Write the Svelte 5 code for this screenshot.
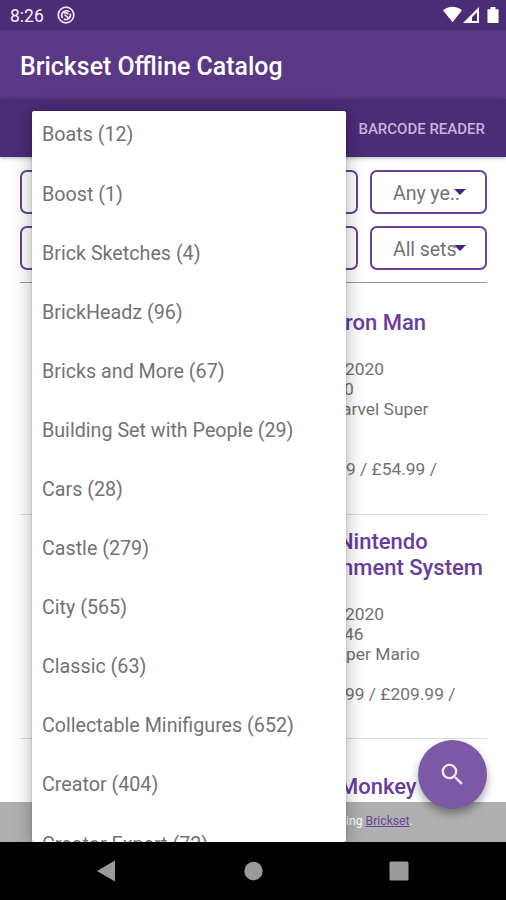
<script lang="ts">
	const themes = [
		{ name: 'Boats', count: 12 },
		{ name: 'Boost', count: 1 },
		{ name: 'Brick Sketches', count: 4 },
		{ name: 'BrickHeadz', count: 96 },
		{ name: 'Bricks and More', count: 67 },
		{ name: 'Building Set with People', count: 29 },
		{ name: 'Cars', count: 28 },
		{ name: 'Castle', count: 279 },
		{ name: 'City', count: 565 },
		{ name: 'Classic', count: 63 },
		{ name: 'Collectable Minifigures', count: 652 },
		{ name: 'Creator', count: 404 },
		{ name: 'Creator Expert', count: 72 }
	];

	const filters = ['Any ye..', 'All sets'];

	// indent = where the visible end of each line starts beside the dropdown
	const sets = [
		{
			title: [{ text: 'ron Man', indent: 3 }],
			info: [
				{ text: '2020', indent: 3 },
				{ text: '0', indent: 2 },
				{ text: 'arvel Super', indent: 0 }
			],
			price: { text: '9 / £54.99 /', indent: 4 }
		},
		{
			title: [
				{ text: 'Nintendo', indent: -4 },
				{ text: 'nment System', indent: -1 }
			],
			info: [
				{ text: '2020', indent: 3 },
				{ text: '46', indent: 2 },
				{ text: 'per Mario', indent: 4 }
			],
			price: { text: '99 / £209.99 /', indent: 3 }
		},
		{ title: [{ text: 'Monkey', indent: -3 }], info: [], price: { text: '', indent: 0 } }
	];
</script>

<div class="screen">
	<header class="status">
		<span class="time">8:26</span>
		<svg class="notify" viewBox="0 0 18 18">
			<circle cx="9" cy="9" r="7.8" />
			<path d="M5.6 12a4.6 4.6 0 0 1 6.8-6.1M13.2 7.4a4.6 4.6 0 0 1-6.4 5.6" />
			<path d="M6.6 7.2c1.8-1 3.6-.6 4.6 1.2M7.6 8.6l5 4.2" />
		</svg>
		<svg class="signals" viewBox="0 0 55 18">
			<path d="M0 4.2C5.6-.5 13.4-.5 19 4.2L9.5 16.2z" />
			<path fill-rule="evenodd" d="M20 17L36 1v16zM29 15h5V6.3l-5 5z" />
			<path d="M44.5 3.2h3V1h5v2.2h3V17h-11z" />
		</svg>
	</header>

	<div class="app-bar"><h1>Brickset Offline Catalog</h1></div>
	<div class="tabs"><span>BARCODE READER</span></div>

	<main>
		<div class="filters">
			{#each filters as label}
				<div class="spinner"></div>
				<div class="spinner">
					<span>{label}</span>
					<svg viewBox="0 0 12 6"><path d="M0 0h12L6 6z" /></svg>
				</div>
			{/each}
		</div>

		<ul class="sets">
			{#each sets as set}
				<li class:double={set.title.length > 1}>
					<h2>
						{#each set.title as line}
							<span style:margin-left="{line.indent}px">{line.text}</span>
						{/each}
					</h2>
					{#each set.info as line}
						<p style:margin-left="{line.indent}px">{line.text}</p>
					{/each}
					<p class="price" style:margin-left="{set.price.indent}px">{set.price.text}</p>
				</li>
			{/each}
		</ul>
	</main>

	<div class="credit">ing&nbsp;<a href="#brickset">Brickset</a>.</div>

	<button class="fab" aria-label="Search">
		<svg viewBox="0 0 24 24">
			<path d="M15.5 14h-.79l-.28-.27A6.47 6.47 0 0 0 16 9.5 6.5 6.5 0 1 0 9.5 16c1.61 0 3.09-.59 4.23-1.57l.27.28v.79l5 4.99L20.49 19l-4.99-5zm-6 0C7.01 14 5 11.99 5 9.5S7.01 5 9.5 5 14 7.01 14 9.5 11.99 14 9.5 14z" />
		</svg>
	</button>

	<ul class="dropdown">
		{#each themes as theme}
			<li>{theme.name} ({theme.count})</li>
		{/each}
	</ul>

	<nav>
		<svg viewBox="0 0 18 22"><path d="M0 11L18 .5v21z" /></svg>
		<svg viewBox="0 0 18 22"><circle cx="9.5" cy="11" r="9.2" /></svg>
		<svg viewBox="0 0 18 22"><rect x="-.5" y="1.5" width="19" height="19" rx="1.5" /></svg>
	</nav>
</div>

<style>
	:global(body) {
		margin: 0;
	}

	.screen {
		position: relative;
		display: flex;
		flex-direction: column;
		width: 506px;
		height: 900px;
		overflow: hidden;
		background: #fff;
		color: #737373;
		font-family: Roboto, sans-serif;
	}

	ul {
		list-style: none;
		margin: 0;
		padding: 0;
	}

	h1,
	h2,
	p {
		margin: 0;
	}

	.status {
		display: flex;
		align-items: center;
		flex: none;
		box-sizing: border-box;
		height: 30px;
		padding: 0 8px 0 10px;
		background: #4b2c76;
		color: #f4effa;
	}

	.time {
		width: 47px;
		padding-top: 2px;
		font-size: 17.5px;
	}

	.notify {
		width: 18px;
		height: 18px;
		fill: none;
		stroke: #eee8f5;
		stroke-width: 1.7;
	}

	.signals {
		width: 55px;
		height: 18px;
		margin-left: auto;
		fill: #fff;
		overflow: visible;
	}

	.app-bar {
		display: flex;
		align-items: center;
		flex: none;
		height: 69px;
		padding: 3px 20px 0;
		box-sizing: border-box;
		background: #5b3886;
		color: #fff;
	}

	h1 {
		font-size: 24.9px;
		font-weight: 500;
		white-space: nowrap;
	}

	.tabs {
		position: relative;
		display: flex;
		align-items: center;
		justify-content: flex-end;
		flex: none;
		height: 58px;
		padding: 2px 21px 0;
		box-sizing: border-box;
		background: #4b2c76;
		color: #c8b4dc;
		font-size: 15px;
		font-weight: 500;
		box-shadow: 0 1px 4px rgba(0, 0, 0, 0.3);
	}

	main {
		flex: 1;
		min-height: 0;
		overflow: hidden;
		padding: 13px 19px 0 20px;
	}

	.filters {
		display: grid;
		grid-template-columns: 338px 117px;
		gap: 12px;
		padding-bottom: 12px;
		border-bottom: 1px solid #999;
	}

	.spinner {
		display: flex;
		align-items: center;
		height: 44px;
		box-sizing: border-box;
		padding: 2px 0 0 21px;
		border: 2px solid #6b4097;
		border-radius: 7px;
		font-size: 19.6px;
		letter-spacing: -0.1px;
		white-space: nowrap;
	}

	.spinner span {
		width: 61px;
	}

	.spinner svg {
		flex: none;
		width: 12px;
		height: 6px;
		margin-top: -3px;
		fill: #4b1d86;
	}

	.sets li {
		height: 232px;
		padding: 27px 0 0 322px;
		box-sizing: border-box;
		border-bottom: 1px solid #ddd;
		white-space: nowrap;
	}

	.sets li.double {
		height: 224px;
		padding-top: 14px;
	}

	.sets li:last-child {
		padding-top: 35px;
	}

	h2 {
		display: flex;
		flex-direction: column;
		margin-bottom: 23px;
		color: #6a3ca0;
		font-size: 22px;
		font-weight: 500;
		line-height: 26px;
	}

	p {
		height: 20px;
		font-size: 17.4px;
		line-height: 20px;
	}

	.price {
		margin-top: 40px;
	}

	.double .price {
		margin-top: 20px;
	}

	.credit {
		flex: none;
		height: 40px;
		box-sizing: border-box;
		padding-left: 346px;
		background: #b0b0b0;
		color: #fff;
		font-size: 12.2px;
		line-height: 39px;
	}

	.credit a {
		color: #6a4799;
	}

	.fab {
		position: absolute;
		right: 19px;
		bottom: 91px;
		display: flex;
		align-items: center;
		justify-content: center;
		width: 69px;
		height: 69px;
		padding: 0;
		border: 0;
		border-radius: 50%;
		background: #7c58a6;
		box-shadow: 0 5px 9px rgba(0, 0, 0, 0.35);
	}

	.fab svg {
		width: 29px;
		height: 29px;
		fill: #f0e6fa;
	}

	.dropdown {
		position: absolute;
		top: 111px;
		left: 32px;
		width: 314px;
		height: 731px;
		overflow: hidden;
		border-radius: 2px;
		background: #fff;
		box-shadow: 0 4px 20px rgba(0, 0, 0, 0.3), 0 0 3px rgba(0, 0, 0, 0.2);
	}

	.dropdown li {
		height: 59.1px;
		padding-left: 10px;
		font-size: 19.7px;
		line-height: 59px;
		white-space: nowrap;
	}

	.dropdown li:first-child {
		margin-top: -5.6px;
	}

	nav {
		position: relative;
		display: flex;
		align-items: center;
		justify-content: space-between;
		flex: none;
		height: 58px;
		box-sizing: border-box;
		padding: 0 98px 0 97px;
		background: #000;
	}

	nav svg {
		width: 18px;
		height: 22px;
		overflow: visible;
		fill: #9b9b9b;
	}
</style>
